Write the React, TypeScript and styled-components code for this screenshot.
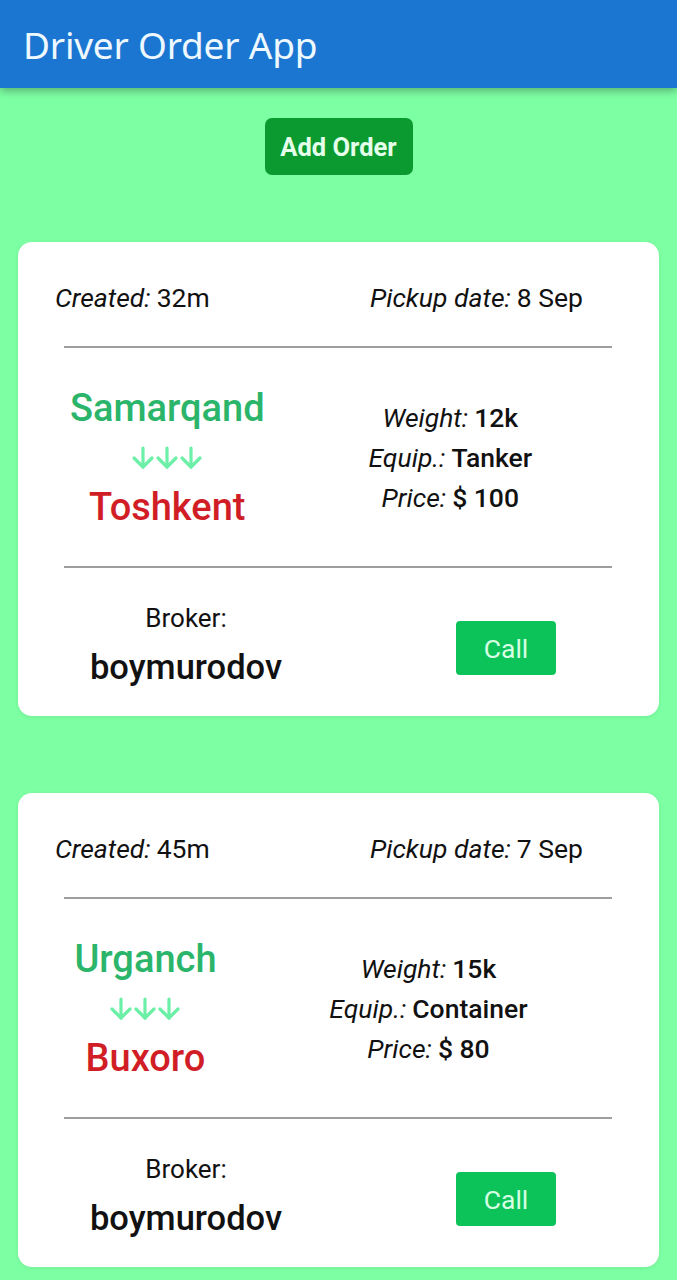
import React from "react";
import styled, { createGlobalStyle } from "styled-components";

const GlobalStyle = createGlobalStyle`
  html, body {
    margin: 0;
    padding: 0;
    background: #7dffa3;
  }
  body {
    font-family: Roboto, "Noto Sans", sans-serif;
    color: #111;
  }
`;

const Page = styled.div`
  min-height: 1280px;
  background: #7dffa3;
  display: flex;
  flex-direction: column;
`;

const Header = styled.header`
  height: 88px;
  background: #1b76d2;
  display: flex;
  align-items: center;
  padding-left: 23px;
  box-shadow: 0 3px 8px rgba(0, 0, 0, 0.3);
  position: relative;
  z-index: 1;
`;

const Title = styled.h1`
  margin: 0;
  font-family: "Noto Sans", "Open Sans", sans-serif;
  font-weight: 400;
  font-size: 37px;
  color: #eef8ff;
  letter-spacing: -0.2px;
`;

const Toolbar = styled.div`
  display: flex;
  justify-content: center;
  padding-top: 30px;
  margin-bottom: 67px;
`;

const AddButton = styled.button`
  width: 148px;
  height: 57px;
  border: none;
  border-radius: 7px;
  background: #0b9a2f;
  color: #e4ffea;
  font-family: Roboto, sans-serif;
  font-weight: 700;
  font-size: 25.5px;
  padding: 0;
`;

const List = styled.div`
  display: flex;
  flex-direction: column;
  gap: 77px;
  padding: 0 18px;
`;

const Card = styled.div`
  background: #fff;
  border-radius: 14px;
  box-shadow: 0 1px 4px rgba(0, 0, 0, 0.08);
  padding: 41px 0 27px;
  display: flex;
  flex-direction: column;
`;

const TopRow = styled.div`
  display: flex;
  justify-content: space-between;
  padding: 0 76px 0 37px;
  line-height: 30px;
  font-size: 26.5px;
`;

const Label = styled.span`
  font-style: italic;
  margin-right: 6px;
`;

const Value = styled.span<{ $strong?: boolean }>`
  font-weight: ${(p) => (p.$strong ? 500 : 400)};
`;

const Divider = styled.hr<{ $top: number; $bottom: number }>`
  border: none;
  height: 2px;
  background: #9e9e9e;
  margin: ${(p) => p.$top}px 47px ${(p) => p.$bottom}px 46px;
`;

const MiddleRow = styled.div`
  display: flex;
  justify-content: space-around;
  align-items: center;
  padding-right: 75px;
`;

const Route = styled.div`
  display: flex;
  flex-direction: column;
  align-items: center;
`;

const City = styled.div<{ $color: string }>`
  font-size: 38px;
  font-weight: 500;
  line-height: 50px;
  color: ${(p) => p.$color};
`;

const Arrows = styled.div`
  line-height: 49px;
  height: 49px;
  display: flex;
  align-items: center;
  color: #6cefa6;
`;

const Details = styled.div`
  display: flex;
  flex-direction: column;
  align-items: center;
  font-size: 26.5px;
  line-height: 40px;
`;

const BottomRow = styled.div`
  display: flex;
  align-items: center;
`;

const Broker = styled.div`
  width: 336px;
  display: flex;
  flex-direction: column;
  align-items: center;
`;

const BrokerLabel = styled.div`
  font-size: 26px;
  line-height: 34px;
`;

const BrokerName = styled.div`
  font-size: 34.5px;
  font-weight: 500;
  line-height: 44px;
  margin-top: 10px;
`;

const CallButton = styled.button`
  margin-left: 102px;
  margin-top: 6px;
  width: 100px;
  height: 54px;
  border: none;
  border-radius: 4px;
  background: #0cc35a;
  color: #d6ffe3;
  font-family: Roboto, sans-serif;
  font-size: 26.5px;
  padding: 0;
`;

const ArrowIcon = () => (
  <svg width="72" height="26" viewBox="0 0 72 26" fill="none" stroke="currentColor" strokeWidth="3.2" strokeLinecap="round" strokeLinejoin="round">
    {[12, 36, 60].map((x) => (
      <g key={x}>
        <line x1={x} y1="3" x2={x} y2="22" />
        <polyline points={`${x - 9},13 ${x},22 ${x + 9},13`} />
      </g>
    ))}
  </svg>
);

type Order = {
  created: string;
  pickup: string;
  from: string;
  to: string;
  weight: string;
  equip: string;
  price: string;
  broker: string;
};

const orders: Order[] = [
  { created: "32m", pickup: "8 Sep", from: "Samarqand", to: "Toshkent", weight: "12k", equip: "Tanker", price: "$ 100", broker: "boymurodov" },
  { created: "45m", pickup: "7 Sep", from: "Urganch", to: "Buxoro", weight: "15k", equip: "Container", price: "$ 80", broker: "boymurodov" },
];

const OrderCard = ({ o }: { o: Order }) => (
  <Card>
    <TopRow>
      <span>
        <Label>Created:</Label>
        <Value>{o.created}</Value>
      </span>
      <span>
        <Label>Pickup date:</Label>
        <Value>{o.pickup}</Value>
      </span>
    </TopRow>
    <Divider $top={33} $bottom={35} />
    <MiddleRow>
      <Route>
        <City $color="#2bb56b">{o.from}</City>
        <Arrows>
          <ArrowIcon />
        </Arrows>
        <City $color="#d11e26">{o.to}</City>
      </Route>
      <Details>
        <div>
          <Label>Weight:</Label>
          <Value $strong>{o.weight}</Value>
        </div>
        <div>
          <Label>Equip.:</Label>
          <Value $strong>{o.equip}</Value>
        </div>
        <div>
          <Label>Price:</Label>
          <Value $strong>{o.price}</Value>
        </div>
      </Details>
    </MiddleRow>
    <Divider $top={34} $bottom={33} />
    <BottomRow>
      <Broker>
        <BrokerLabel>Broker:</BrokerLabel>
        <BrokerName>{o.broker}</BrokerName>
      </Broker>
      <CallButton>Call</CallButton>
    </BottomRow>
  </Card>
);

export default function App() {
  return (
    <Page>
      <GlobalStyle />
      <Header>
        <Title>Driver Order App</Title>
      </Header>
      <Toolbar>
        <AddButton>Add Order</AddButton>
      </Toolbar>
      <List>
        {orders.map((o, i) => (
          <OrderCard key={i} o={o} />
        ))}
      </List>
    </Page>
  );
}
